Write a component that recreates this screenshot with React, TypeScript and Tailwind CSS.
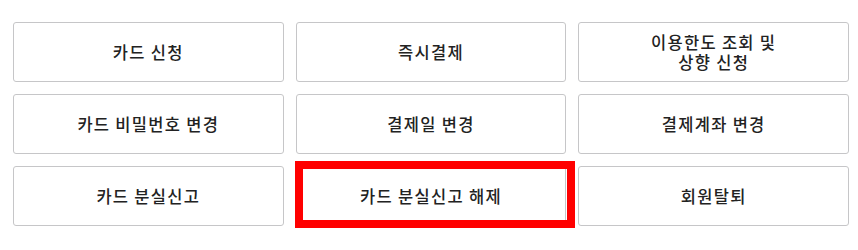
const items: string[][] = [
  ['카드 신청'],
  ['즉시결제'],
  ['이용한도 조회 및', '상향 신청'],
  ['카드 비밀번호 변경'],
  ['결제일 변경'],
  ['결제계좌 변경'],
  ['카드 분실신고'],
  ['카드 분실신고 해제'],
  ['회원탈퇴'],
];

export default function App() {
  return (
    <div
      className="relative w-[858px] h-[250px] bg-white pt-[22px] pl-[13px] pr-[9px]"
      style={{ fontFamily: '"Noto Sans CJK KR", "Noto Sans", sans-serif' }}
    >
      <div className="grid grid-cols-3 gap-x-[12px] gap-y-[12px]">
        {items.map((lines, i) => (
          <button
            key={i}
            className="h-[60px] flex flex-col items-center justify-center border border-[#c6c6c8] rounded-[3px] bg-white text-[16.5px] leading-[20px] tracking-[1.3px] font-medium text-[#222]"
          >
            {lines.map((l, j) => (
              <span key={j} className="block">
                {l}
              </span>
            ))}
          </button>
        ))}
      </div>
      <div className="absolute left-[295px] top-[161px] w-[280px] h-[67px] border-[8px] border-[#ff0000] pointer-events-none" />
    </div>
  );
}
